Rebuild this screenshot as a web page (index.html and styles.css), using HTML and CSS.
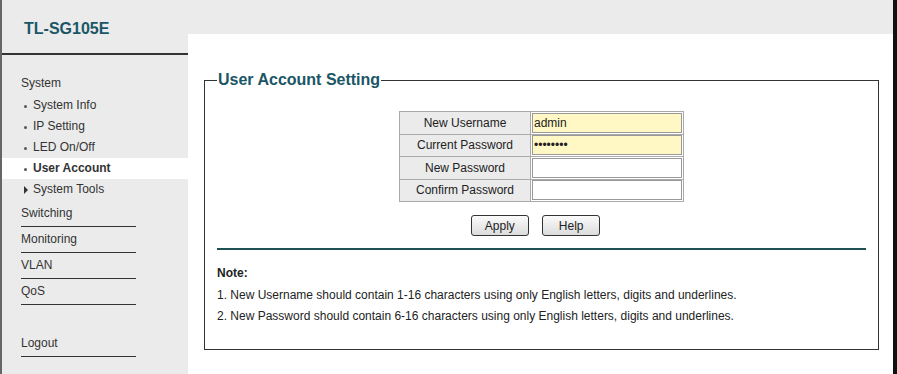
FILE: index.html
```html
<!DOCTYPE html>
<html lang="en">
<head>
    <meta charset="UTF-8">
    <title>TL-SG105E</title>
    <link rel="stylesheet" href="styles.css">
</head>
<body>
    <div class="page">
        <div class="sidebar">
            <div class="logo">TL-SG105E</div>
            <ul class="menu">
                <li class="group">System</li>
                <li class="sub">System Info</li>
                <li class="sub">IP Setting</li>
                <li class="sub">LED On/Off</li>
                <li class="sub active">User Account</li>
                <li class="sub closed">System Tools</li>
                <li class="top">Switching</li>
                <li class="top">Monitoring</li>
                <li class="top">VLAN</li>
                <li class="top">QoS</li>
                <li class="top logout">Logout</li>
            </ul>
        </div>
        <div class="main">
            <div class="topbar"></div>
            <div class="content">
                <fieldset class="box">
                    <legend>User Account Setting</legend>
                    <table class="form">
                        <tr>
                            <td class="label">New Username</td>
                            <td class="field"><input type="text" class="fill" value="admin"></td>
                        </tr>
                        <tr>
                            <td class="label">Current Password</td>
                            <td class="field"><input type="password" class="fill" value="12345678"></td>
                        </tr>
                        <tr>
                            <td class="label">New Password</td>
                            <td class="field"><input type="password"></td>
                        </tr>
                        <tr>
                            <td class="label">Confirm Password</td>
                            <td class="field"><input type="password"></td>
                        </tr>
                    </table>
                    <div class="buttons">
                        <button>Apply</button>
                        <button>Help</button>
                    </div>
                    <div class="divider"></div>
                    <div class="note">
                        <p class="title">Note:</p>
                        <p>1. New Username should contain 1-16 characters using only English letters, digits and underlines.</p>
                        <p>2. New Password should contain 6-16 characters using only English letters, digits and underlines.</p>
                    </div>
                </fieldset>
            </div>
        </div>
        <div class="edge"></div>
    </div>
</body>
</html>
```

FILE: styles.css
```css
body {
    margin: 0;
    font-family: "Liberation Sans", Arial, sans-serif;
    font-size: 12px;
    color: #333;
}
.page {
    display: flex;
    width: 897px;
    height: 374px;
    overflow: hidden;
}
.sidebar {
    width: 186px;
    border-left: 2px solid #666;
    background-color: #ebebeb;
}
.logo {
    height: 53px;
    border-bottom: 2px solid #333;
    padding-left: 22px;
    line-height: 58px;
    font-size: 16px;
    font-weight: bold;
    color: #1a5666;
}
.menu {
    list-style: none;
    margin: 0;
    padding: 18px 0 0 0;
}
.menu li {
    height: 21px;
    line-height: 21px;
}
.group {
    padding-left: 19px;
    height: 22px !important;
}
.sub {
    padding-left: 31px;
    position: relative;
}
.sub::before {
    content: "";
    position: absolute;
    left: 22px;
    top: 10px;
    width: 3px;
    height: 3px;
    border-radius: 50%;
    background-color: #555;
}
.sub.active {
    background-color: #fff;
    font-weight: bold;
}
.sub.closed {
    margin-bottom: 1px;
}
.sub.closed::before {
    top: 7px;
    width: 0;
    height: 0;
    border-radius: 0;
    background: none;
    border-left: 4px solid #333;
    border-top: 4px solid transparent;
    border-bottom: 4px solid transparent;
}
.menu .top {
    width: 115px;
    margin-left: 19px;
    height: 25px;
    line-height: 24px;
    border-bottom: 1px solid #333;
}
.menu .logout {
    margin-top: 26px;
}
.main {
    flex: 1;
    display: flex;
    flex-direction: column;
}
.topbar {
    height: 34px;
    background-color: #ebebeb;
}
.content {
    flex: 1;
    background-color: #fff;
    padding: 37px 0 0 16px;
}
.box {
    width: 649px;
    height: 277px;
    margin: 0;
    padding: 0 12px;
    border: 1px solid #333;
}
.box legend {
    padding: 0 1px;
    font-size: 16px;
    font-weight: bold;
    color: #1a5666;
}
.form {
    margin: 22px auto 0 auto;
    border-collapse: collapse;
}
.form td {
    border: 1px solid #aaa;
    height: 21.5px;
    padding: 0;
}
.label {
    width: 130px;
    background-color: #ebebeb;
    text-align: center;
    color: #222;
}
.field {
    width: 152px;
    background-color: #fff;
}
.field input {
    display: block;
    box-sizing: border-box;
    width: 150px;
    height: 20px;
    margin: 0 auto;
    padding: 0 1px;
    border: 1px solid #999;
    font-family: "Liberation Sans", Arial, sans-serif;
    font-size: 12px;
    color: #222;
}
.field input.fill {
    background-color: #fff7c4;
}
.buttons {
    margin-top: 13px;
    text-align: center;
    padding-right: 12px;
}
.buttons button {
    width: 58px;
    height: 21px;
    margin: 0 5px;
    padding: 0;
    border: 1px solid #333;
    border-radius: 3px;
    background: linear-gradient(#fafafa, #dcdcdc);
    font-family: "Liberation Sans", Arial, sans-serif;
    font-size: 12px;
    color: #222;
}
.divider {
    margin-top: 12px;
    height: 2px;
    background-color: #1e5252;
}
.note {
    margin-top: 15px;
    color: #222;
}
.note p {
    margin: 0;
    height: 21px;
    line-height: 17px;
}
.note .title {
    font-weight: bold;
    height: 22px;
}
.edge {
    width: 4px;
    background-color: #111;
}
```
